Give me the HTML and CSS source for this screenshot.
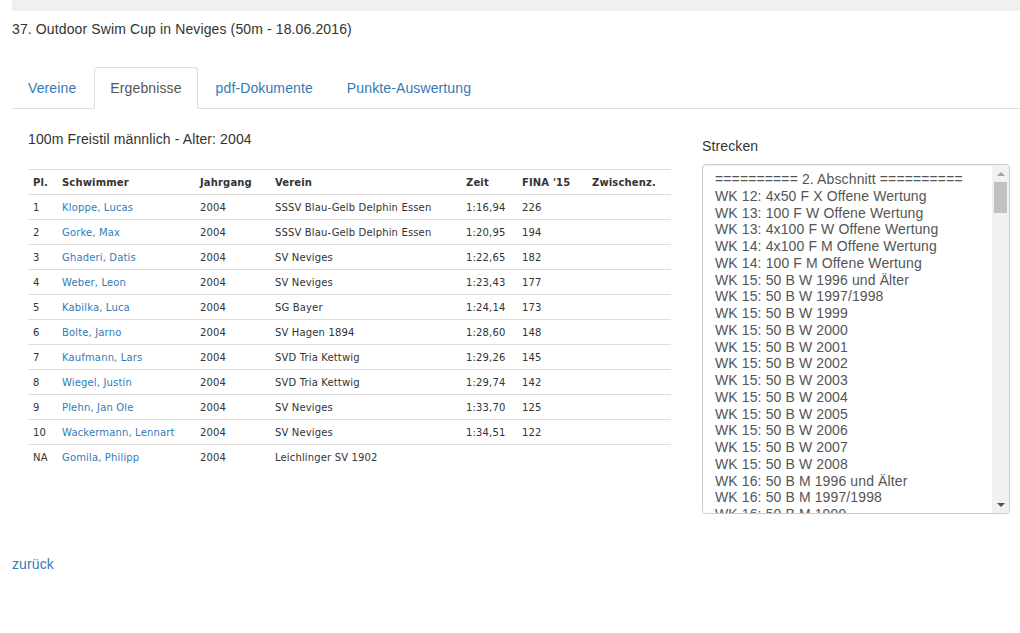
FILE: index.html
```html
<!DOCTYPE html>
<html lang="de">
<head>
    <meta charset="UTF-8">
    <title>37. Outdoor Swim Cup in Neviges</title>
    <link rel="stylesheet" href="styles.css">
</head>
<body>
    <div class="topbar"></div>
    <div class="page">
        <h1 class="title">37. Outdoor Swim Cup in Neviges (50m - 18.06.2016)</h1>

        <ul class="tabs">
            <li><a href="#">Vereine</a></li>
            <li class="active"><a href="#">Ergebnisse</a></li>
            <li><a href="#">pdf-Dokumente</a></li>
            <li><a href="#">Punkte-Auswertung</a></li>
        </ul>

        <div class="content">
            <div class="results">
                <h2 class="race">100m Freistil männlich - Alter: 2004</h2>
                <table class="ranking">
                    <thead>
                        <tr>
                            <th class="c-pl">Pl.</th>
                            <th class="c-name">Schwimmer</th>
                            <th class="c-year">Jahrgang</th>
                            <th class="c-club">Verein</th>
                            <th class="c-time">Zeit</th>
                            <th class="c-fina">FINA '15</th>
                            <th class="c-split">Zwischenz.</th>
                        </tr>
                    </thead>
                    <tbody>
                        <tr><td>1</td><td><a href="#">Kloppe, Lucas</a></td><td>2004</td><td>SSSV Blau-Gelb Delphin Essen</td><td>1:16,94</td><td>226</td><td></td></tr>
                        <tr><td>2</td><td><a href="#">Gorke, Max</a></td><td>2004</td><td>SSSV Blau-Gelb Delphin Essen</td><td>1:20,95</td><td>194</td><td></td></tr>
                        <tr><td>3</td><td><a href="#">Ghaderi, Datis</a></td><td>2004</td><td>SV Neviges</td><td>1:22,65</td><td>182</td><td></td></tr>
                        <tr><td>4</td><td><a href="#">Weber, Leon</a></td><td>2004</td><td>SV Neviges</td><td>1:23,43</td><td>177</td><td></td></tr>
                        <tr><td>5</td><td><a href="#">Kabilka, Luca</a></td><td>2004</td><td>SG Bayer</td><td>1:24,14</td><td>173</td><td></td></tr>
                        <tr><td>6</td><td><a href="#">Bolte, Jarno</a></td><td>2004</td><td>SV Hagen 1894</td><td>1:28,60</td><td>148</td><td></td></tr>
                        <tr><td>7</td><td><a href="#">Kaufmann, Lars</a></td><td>2004</td><td>SVD Tria Kettwig</td><td>1:29,26</td><td>145</td><td></td></tr>
                        <tr><td>8</td><td><a href="#">Wiegel, Justin</a></td><td>2004</td><td>SVD Tria Kettwig</td><td>1:29,74</td><td>142</td><td></td></tr>
                        <tr><td>9</td><td><a href="#">Plehn, Jan Ole</a></td><td>2004</td><td>SV Neviges</td><td>1:33,70</td><td>125</td><td></td></tr>
                        <tr><td>10</td><td><a href="#">Wackermann, Lennart</a></td><td>2004</td><td>SV Neviges</td><td>1:34,51</td><td>122</td><td></td></tr>
                        <tr><td>NA</td><td><a href="#">Gomila, Philipp</a></td><td>2004</td><td>Leichlinger SV 1902</td><td></td><td></td><td></td></tr>
                    </tbody>
                </table>
            </div>

            <div class="races">
                <div class="races-label">Strecken</div>
                <div class="race-list">
                    <div class="options">
                        <div>========== 2. Abschnitt ==========</div>
                        <div>WK 12: 4x50 F X Offene Wertung</div>
                        <div>WK 13: 100 F W Offene Wertung</div>
                        <div>WK 13: 4x100 F W Offene Wertung</div>
                        <div>WK 14: 4x100 F M Offene Wertung</div>
                        <div>WK 14: 100 F M Offene Wertung</div>
                        <div>WK 15: 50 B W 1996 und Älter</div>
                        <div>WK 15: 50 B W 1997/1998</div>
                        <div>WK 15: 50 B W 1999</div>
                        <div>WK 15: 50 B W 2000</div>
                        <div>WK 15: 50 B W 2001</div>
                        <div>WK 15: 50 B W 2002</div>
                        <div>WK 15: 50 B W 2003</div>
                        <div>WK 15: 50 B W 2004</div>
                        <div>WK 15: 50 B W 2005</div>
                        <div>WK 15: 50 B W 2006</div>
                        <div>WK 15: 50 B W 2007</div>
                        <div>WK 15: 50 B W 2008</div>
                        <div>WK 16: 50 B M 1996 und Älter</div>
                        <div>WK 16: 50 B M 1997/1998</div>
                        <div>WK 16: 50 B M 1999</div>
                    </div>
                    <div class="scrollbar">
                        <span class="arrow arrow-up"></span>
                        <span class="thumb"></span>
                        <span class="track"></span>
                        <span class="arrow arrow-down"></span>
                    </div>
                </div>
            </div>
        </div>

        <a class="back" href="#">zurück</a>
    </div>
</body>
</html>
```

FILE: styles.css
```css
body {
    margin: 0;
    font-family: "Liberation Sans", Arial, sans-serif;
    font-size: 14px;
    line-height: 20px;
    letter-spacing: 0.12px;
    color: #333;
}
a {
    color: #337ab7;
    text-decoration: none;
}
.topbar {
    height: 11px;
    margin-left: 12px;
    background-color: #f0f0f0;
}
.page {
    padding-left: 12px;
}
.title {
    margin: 8px 0 0;
    font-size: 14px;
    font-weight: normal;
    line-height: 20px;
}

/* Tabs */
.tabs {
    display: flex;
    margin: 28px 0 0;
    padding: 0;
    list-style: none;
    border-bottom: 1px solid #ddd;
}
.tabs li {
    margin-right: 2px;
    margin-bottom: -1px;
}
.tabs a {
    display: block;
    padding: 10px 15px;
    line-height: 20px;
    border: 1px solid transparent;
    border-radius: 4px 4px 0 0;
}
.tabs .active a {
    color: #555;
    background-color: #fff;
    border-color: #ddd #ddd transparent;
}

/* Content */
.content {
    display: grid;
    grid-template-columns: 659px 308px;
    column-gap: 31px;
    padding-top: 20px;
}
.results {
    padding-left: 16px;
}
.race {
    margin: 0;
    font-size: 14px;
    font-weight: normal;
    line-height: 20px;
}
.ranking {
    width: 643px;
    margin-top: 20px;
    border-collapse: collapse;
    table-layout: fixed;
    font-family: "DejaVu Sans", Verdana, sans-serif;
    font-size: 10px;
    line-height: 14px;
    letter-spacing: 0.15px;
    color: #333;
}
.ranking th,
.ranking td {
    padding: 6px 5px 4px;
    text-align: left;
    border-top: 1px solid #ddd;
    white-space: nowrap;
}
.ranking th {
    font-weight: bold;
}
.c-pl { width: 19px; }
.c-name { width: 128px; }
.c-year { width: 65px; }
.c-club { width: 181px; }
.c-time { width: 46px; }
.c-fina { width: 60px; }
.c-split { width: 74px; }

/* Strecken */
.races {
    padding-top: 7px;
}
.races-label {
    line-height: 20px;
}
.race-list {
    display: flex;
    height: 350px;
    margin-top: 8px;
    box-sizing: border-box;
    border: 1px solid #ccc;
    border-radius: 4px;
    box-shadow: inset 0 1px 1px rgba(0, 0, 0, 0.075);
    overflow: hidden;
}
.options {
    flex: 1;
    padding: 6px 12px;
    color: #555;
    line-height: 16.75px;
    overflow: hidden;
    white-space: nowrap;
}
.scrollbar {
    display: flex;
    flex-direction: column;
    width: 17px;
    background-color: #f1f1f1;
}
.arrow {
    display: flex;
    height: 17px;
    align-items: center;
    justify-content: center;
}
.arrow::before {
    content: "";
    border-left: 4px solid transparent;
    border-right: 4px solid transparent;
}
.arrow-up::before {
    border-bottom: 4px solid #a3a3a3;
}
.arrow-down::before {
    border-top: 4px solid #505050;
}
.thumb {
    height: 31px;
    margin: 0 2px;
    background-color: #c1c1c1;
}
.track {
    flex: 1;
}

.back {
    display: inline-block;
    margin-top: 40px;
    line-height: 20px;
}
```
